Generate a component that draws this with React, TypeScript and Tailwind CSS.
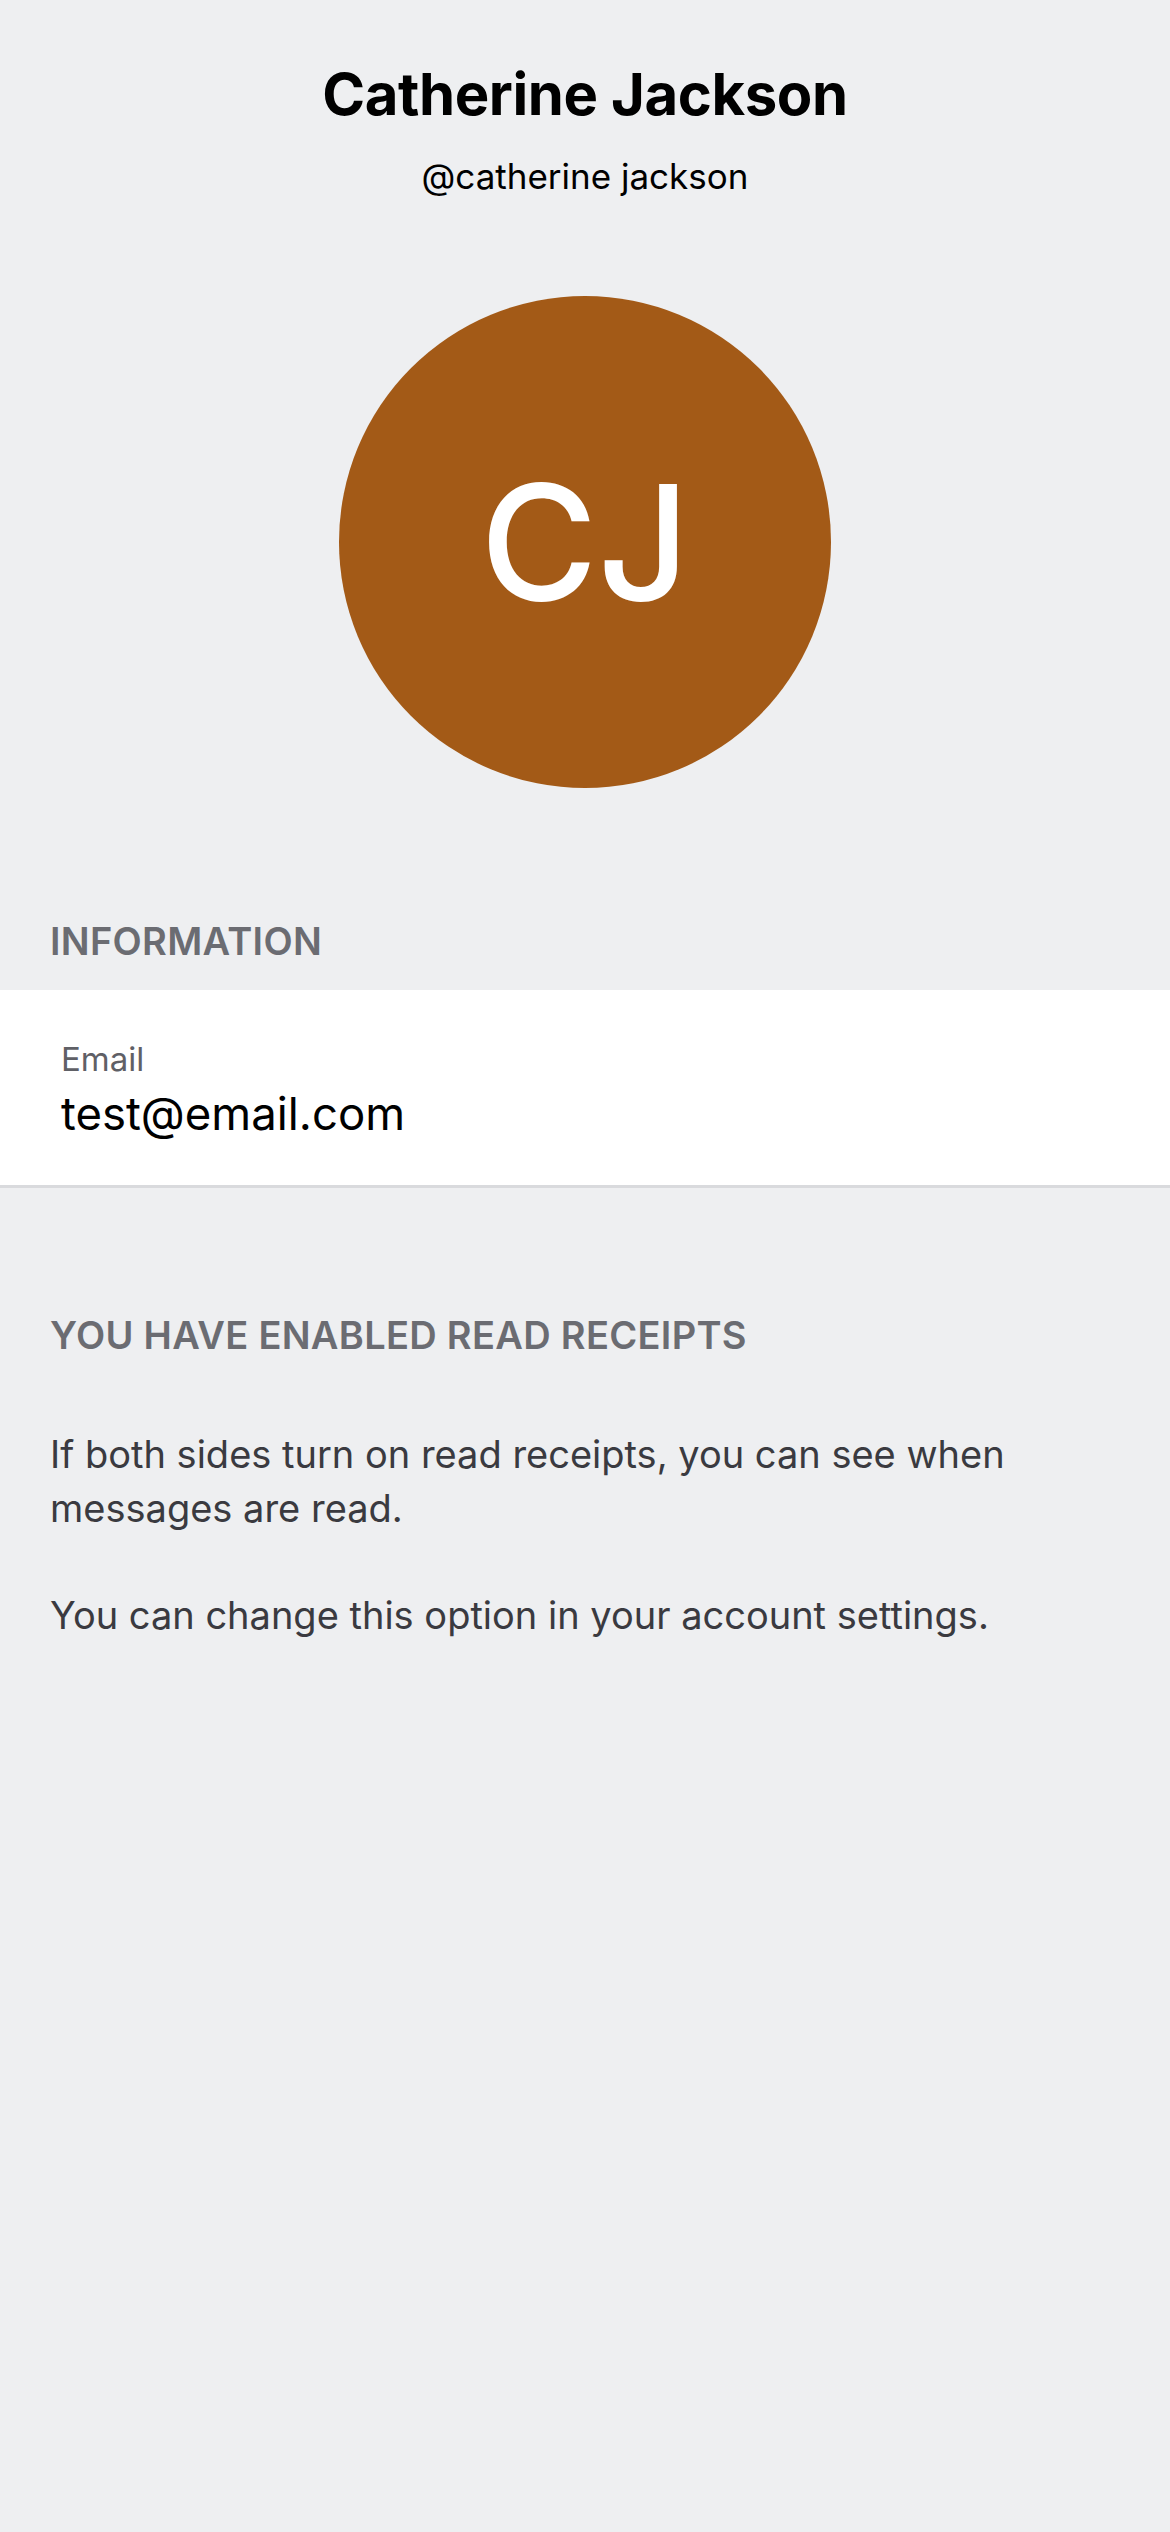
export default function App() {
  return (
    <div
      className="min-h-[2532px] w-full bg-[#eeeff1] text-black"
      style={{ fontFamily: "Inter, 'Noto Sans', sans-serif" }}
    >
      <header className="flex flex-col items-center pt-[58px]">
        <h1 className="text-[58px] font-bold leading-[72px] tracking-[-0.4px]">Catherine Jackson</h1>
        <p className="mt-[24px] text-[35px] leading-[44px]">@catherine jackson</p>
        <div className="mt-[98px] flex h-[492px] w-[492px] items-center justify-center rounded-full bg-[#a35a17]">
          <span className="text-[160px] font-medium leading-none text-white">CJ</span>
        </div>
      </header>

      <section className="mt-[130px]">
        <h2 className="px-[50px] text-[38px] font-semibold uppercase leading-[46px] tracking-[0.3px] text-[#6b6c72]">
          Information
        </h2>
        <div className="mt-[26px] border-b-[3px] border-[#d9dadd] bg-white px-[61px] pb-[44px] pt-[51px]">
          <p className="text-[33px] leading-[36px] text-[#5f6066]">Email</p>
          <p className="mt-[10px] text-[45.5px] leading-[54px]">test@email.com</p>
        </div>
      </section>

      <section className="mt-[124px] px-[50px]">
        <h2 className="text-[38px] font-semibold uppercase leading-[46px] tracking-[0.3px] text-[#6b6c72]">
          You have enabled read receipts
        </h2>
        <div className="mt-[69px] space-y-[53px] text-[38px] leading-[54px] text-[#3a3a40]">
          <p>If both sides turn on read receipts, you can see when messages are read.</p>
          <p>You can change this option in your account settings.</p>
        </div>
      </section>
    </div>
  );
}
